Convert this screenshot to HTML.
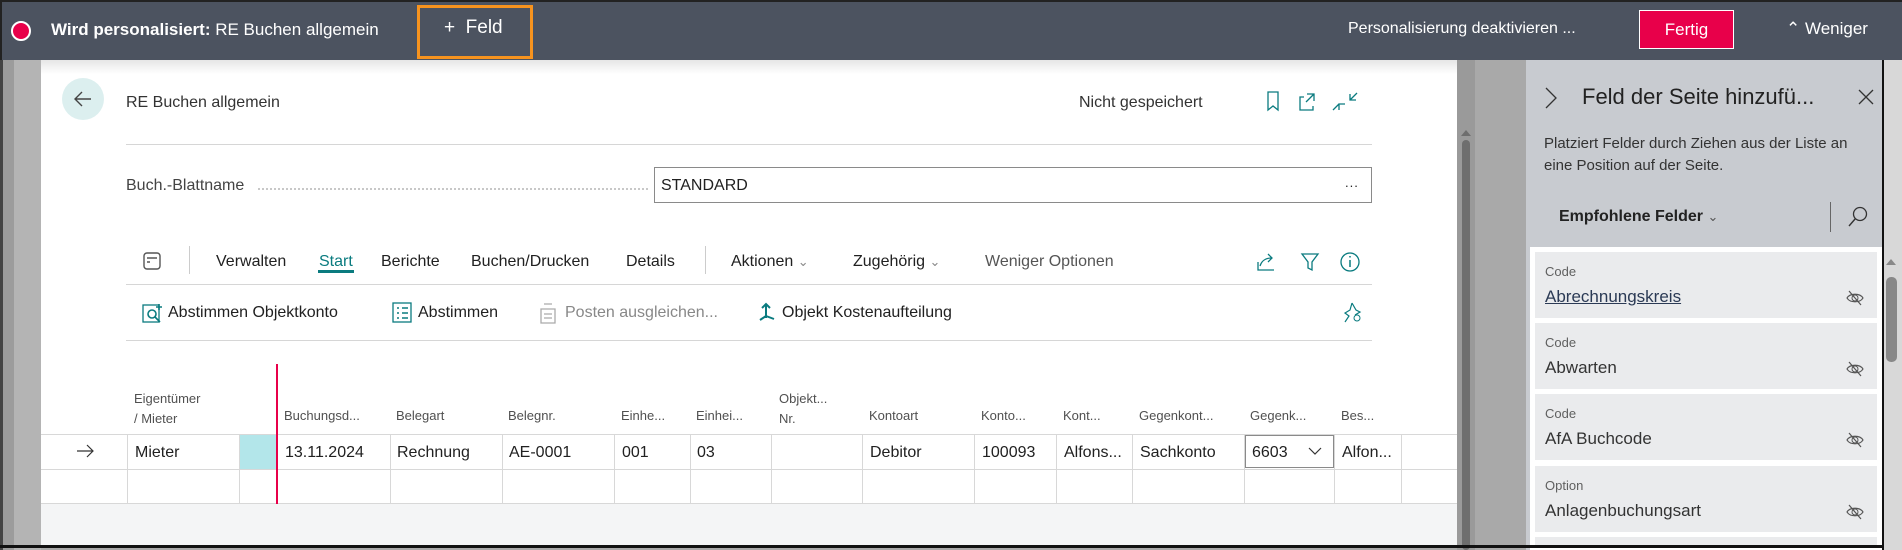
<!DOCTYPE html>
<html><head><meta charset="utf-8"><style>
*{box-sizing:border-box;margin:0;padding:0}
body{width:1902px;height:550px;overflow:hidden;position:relative;font-family:"Liberation Sans",sans-serif;background:#a8a8a8;color:#212121}
.a{position:absolute;white-space:nowrap}
.top{left:0;top:0;width:1902px;height:60px;background:#4c5360;border-top:2px solid #222;border-left:2px solid #222}
.t{color:#fff;font-size:17px}
.hd{color:#505050;font-size:13px}
.cell{font-size:16px;color:#212121}
.vl{position:absolute;width:1px;background:#d8d8d8}
.card{position:absolute;left:1535px;width:342px;height:66px;background:#eaebed}
.card .l{position:absolute;left:10px;top:12px;font-size:13px;color:#606060}
.card .n{position:absolute;left:10px;top:35px;font-size:17px;color:#333}
.card svg{position:absolute;left:310px;top:36px}
</style></head><body>
<!-- left gutter -->
<div class="a" style="left:0;top:60px;width:41px;height:490px;background:linear-gradient(90deg,#444 0 3px,#9c9c9c 3px 14px,#b4b4b4 14px 41px)"></div>
<!-- main white -->
<div class="a" style="left:41px;top:60px;width:1416px;height:485px;background:#fff"></div>
<div class="a" style="left:41px;top:60px;width:1416px;height:14px;background:linear-gradient(#e6e6e6,#fff)"></div>
<!-- scrollbar main -->
<div class="a" style="left:1457px;top:60px;width:18px;height:490px;background:#9a9a9a"></div>
<div class="a" style="left:1462px;top:140px;width:8px;height:410px;background:#6e6e6e;border-radius:4px"></div>
<div class="a" style="left:1461px;top:130px;width:0;height:0;border-left:5px solid transparent;border-right:5px solid transparent;border-bottom:6px solid #6e6e6e"></div>
<div class="a" style="left:1475px;top:60px;width:51px;height:490px;background:#a9a9a9"></div>
<!-- panel -->
<div class="a" style="left:1526px;top:60px;width:356px;height:490px;background:#c8cbd0"></div>
<div class="a" style="left:1530px;top:247px;width:352px;height:303px;background:#fff"></div>
<div class="a" style="left:1882px;top:0;width:2px;height:550px;background:#111"></div>
<div class="a" style="left:1884px;top:60px;width:18px;height:490px;background:#d8d8d8"></div>
<div class="a" style="left:1886px;top:277px;width:11px;height:85px;background:#888;border-radius:5px"></div>
<div class="a" style="left:1886px;top:259px;border-left:5px solid transparent;border-right:5px solid transparent;border-bottom:6px solid #888"></div>
<div class="a" style="left:0;top:545px;width:1884px;height:3px;background:#111"></div>

<!-- top bar -->
<div class="a top"></div>
<div class="a" style="left:11px;top:21px;width:20px;height:20px;border-radius:50%;background:#e8004a;border:2px solid #fff"></div>
<div class="a t" style="left:51px;top:20px"><b>Wird personalisiert:</b> RE Buchen allgemein</div>
<div class="a" style="left:417px;top:5px;width:116px;height:54px;border:3px solid #f7931e"></div>
<div class="a t" style="left:444px;top:17px;font-size:19px">+&nbsp; Feld</div>
<div class="a t" style="left:1348px;top:20px;font-size:16px">Personalisierung deaktivieren ...</div>
<div class="a" style="left:1639px;top:10px;width:95px;height:39px;background:#e8004a;border:1px solid #fff;color:#fff;font-size:17px;text-align:center;line-height:37px">Fertig</div>
<div class="a t" style="left:1786px;top:19px;font-size:17px">&#8963; Weniger</div>

<!-- header -->
<div class="a" style="left:62px;top:78px;width:42px;height:42px;border-radius:50%;background:#dcefef"></div>
<svg class="a" style="left:71px;top:88px" width="24" height="22"><path d="M20 11H4M11 4L4 11L11 18" stroke="#444" stroke-width="1.4" fill="none"/></svg>
<div class="a" style="left:126px;top:94px;font-size:16px;color:#333">RE Buchen allgemein</div>
<div class="a" style="left:1079px;top:94px;font-size:16px;color:#333">Nicht gespeichert</div>
<svg class="a" style="left:1262px;top:90px" width="100" height="24"><path d="M6 2h10v18l-5-4-5 4z" stroke="#0a7b7f" fill="none" stroke-width="1.3"/><path d="M42 7h-4v13h13v-4M45 4h7v7M52 4l-8 8" stroke="#0a7b7f" fill="none" stroke-width="1.3"/><path d="M88 4v6h6M88 10l7-7M77 20v-6h6M77 14l-6 6" stroke="#0a7b7f" fill="none" stroke-width="1.3"/></svg>
<div class="a" style="left:126px;top:144px;width:1246px;height:1px;background:#d6d6d6"></div>
<div class="a" style="left:126px;top:177px;font-size:16px;color:#444">Buch.-Blattname</div>
<div class="a" style="left:258px;top:188px;width:390px;border-top:2px dotted #c8c8c8"></div>
<div class="a" style="left:654px;top:167px;width:718px;height:36px;border:1px solid #8a8a8a"></div>
<div class="a" style="left:661px;top:177px;font-size:16px">STANDARD</div>
<div class="a" style="left:1345px;top:175px;font-size:13px;letter-spacing:1px">...</div>

<!-- menu -->
<svg class="a" style="left:142px;top:251px" width="22" height="22"><rect x="2" y="2" width="16" height="16" rx="3" stroke="#555" fill="none" stroke-width="1.4"/><path d="M5 7h10M5 11h3" stroke="#555" stroke-width="1.6"/></svg>
<div class="a" style="left:189px;top:246px;width:1px;height:28px;background:#ccc"></div>
<div class="a" style="left:705px;top:246px;width:1px;height:28px;background:#ccc"></div>
<div class="a" style="left:216px;top:253px;font-size:16px">Verwalten</div>
<div class="a" style="left:319px;top:253px;font-size:16px;color:#0a7b7f">Start</div>
<div class="a" style="left:318px;top:270px;width:36px;height:3px;background:#0a7b7f"></div>
<div class="a" style="left:381px;top:253px;font-size:16px">Berichte</div>
<div class="a" style="left:471px;top:253px;font-size:16px">Buchen/Drucken</div>
<div class="a" style="left:626px;top:253px;font-size:16px">Details</div>
<div class="a" style="left:731px;top:253px;font-size:16px">Aktionen <span style="color:#888;font-size:13px">&#8964;</span></div>
<div class="a" style="left:853px;top:253px;font-size:16px">Zugehörig <span style="color:#888;font-size:13px">&#8964;</span></div>
<div class="a" style="left:985px;top:253px;font-size:16px;color:#555">Weniger Optionen</div>
<svg class="a" style="left:1255px;top:250px" width="110" height="24"><path d="M3 12v8h16M5 16c2-6 6-8 12-8M13 4l4 4-4 4" stroke="#0a7b7f" fill="none" stroke-width="1.3"/><path d="M47 4h16l-6 8v8l-4-2v-6z" stroke="#0a7b7f" fill="none" stroke-width="1.3"/><circle cx="95" cy="12" r="9" stroke="#0a7b7f" fill="none" stroke-width="1.3"/><path d="M95 10v7M95 6v1.5" stroke="#0a7b7f" stroke-width="1.5"/></svg>
<div class="a" style="left:126px;top:284px;width:1246px;height:1px;background:#d6d6d6"></div>

<!-- actions -->
<svg class="a" style="left:142px;top:302px" width="22" height="22"><rect x="1" y="3" width="16" height="17" stroke="#0a7b7f" fill="none" stroke-width="1.3"/><circle cx="10" cy="12" r="4" stroke="#0a7b7f" fill="none" stroke-width="1.6"/><path d="M13 15l5 5M17 2v6M14 5h6" stroke="#0a7b7f" stroke-width="1.6"/></svg>
<div class="a" style="left:168px;top:304px;font-size:16px">Abstimmen Objektkonto</div>
<svg class="a" style="left:392px;top:302px" width="22" height="22"><rect x="1" y="1" width="18" height="19" stroke="#0a7b7f" fill="none" stroke-width="1.3"/><path d="M5 6h2M10 6h6M5 11h2M10 11h6M5 16h2M10 16h6" stroke="#0a7b7f" stroke-width="1.5"/></svg>
<div class="a" style="left:418px;top:304px;font-size:16px">Abstimmen</div>
<svg class="a" style="left:539px;top:301px" width="20" height="24"><path d="M2 8h14v14H2zM5 3h8M5 13h8M5 17h8" stroke="#aaa" fill="none" stroke-width="1.3"/></svg>
<div class="a" style="left:565px;top:304px;font-size:16px;color:#888">Posten ausgleichen...</div>
<svg class="a" style="left:757px;top:302px" width="22" height="22"><path d="M9 2v14M5 6l4-4 4 4M9 14l-6 4M9 14l8 3" stroke="#0a7b7f" fill="none" stroke-width="2"/></svg>
<div class="a" style="left:782px;top:304px;font-size:16px">Objekt Kostenaufteilung</div>
<svg class="a" style="left:1342px;top:301px" width="22" height="24"><path d="M10 2l-2 7-5 3 4 3-4 6M10 2l4 7 4 2-5 3" stroke="#0a7b7f" fill="none" stroke-width="1.2"/><circle cx="15" cy="17" r="3" stroke="#0a7b7f" fill="none"/></svg>
<div class="a" style="left:126px;top:340px;width:1246px;height:1px;background:#d6d6d6"></div>

<!-- table -->
<div class="a hd" style="left:134px;top:389px;line-height:20px">Eigentümer<br>/ Mieter</div>
<div class="a hd" style="left:284px;top:408px">Buchungsd...</div>
<div class="a hd" style="left:396px;top:408px">Belegart</div>
<div class="a hd" style="left:508px;top:408px">Belegnr.</div>
<div class="a hd" style="left:621px;top:408px">Einhe...</div>
<div class="a hd" style="left:696px;top:408px">Einhei...</div>
<div class="a hd" style="left:779px;top:389px;line-height:20px">Objekt...<br>Nr.</div>
<div class="a hd" style="left:869px;top:408px">Kontoart</div>
<div class="a hd" style="left:981px;top:408px">Konto...</div>
<div class="a hd" style="left:1063px;top:408px">Kont...</div>
<div class="a hd" style="left:1139px;top:408px">Gegenkont...</div>
<div class="a hd" style="left:1250px;top:408px">Gegenk...</div>
<div class="a hd" style="left:1341px;top:408px">Bes...</div>

<div class="a" style="left:41px;top:434px;width:1416px;height:1px;background:#d8d8d8"></div>
<div class="a" style="left:41px;top:469px;width:1416px;height:1px;background:#d8d8d8"></div>
<div class="a" style="left:41px;top:503px;width:1416px;height:1px;background:#d8d8d8"></div>
<div class="a" style="left:41px;top:504px;width:1416px;height:41px;background:#f4f5f6"></div>
<div class="a" style="left:239px;top:435px;width:37px;height:34px;background:#b3e6ea"></div>
<div class="vl" style="left:127px;top:435px;height:68px"></div>
<div class="vl" style="left:239px;top:435px;height:68px"></div>
<div class="vl" style="left:390px;top:435px;height:68px"></div>
<div class="vl" style="left:502px;top:435px;height:68px"></div>
<div class="vl" style="left:614px;top:435px;height:68px"></div>
<div class="vl" style="left:690px;top:435px;height:68px"></div>
<div class="vl" style="left:771px;top:435px;height:68px"></div>
<div class="vl" style="left:862px;top:435px;height:68px"></div>
<div class="vl" style="left:974px;top:435px;height:68px"></div>
<div class="vl" style="left:1056px;top:435px;height:68px"></div>
<div class="vl" style="left:1132px;top:435px;height:68px"></div>
<div class="vl" style="left:1244px;top:435px;height:68px"></div>
<div class="vl" style="left:1334px;top:435px;height:68px"></div>
<div class="vl" style="left:1401px;top:435px;height:68px"></div>
<div class="a" style="left:276px;top:364px;width:2px;height:140px;background:#e8004a"></div>
<svg class="a" style="left:76px;top:444px" width="20" height="14"><path d="M1 7h16M11 1l6 6-6 6" stroke="#333" fill="none" stroke-width="1.2"/></svg>
<div class="a cell" style="left:135px;top:444px">Mieter</div>
<div class="a cell" style="left:285px;top:444px">13.11.2024</div>
<div class="a cell" style="left:397px;top:444px">Rechnung</div>
<div class="a cell" style="left:509px;top:444px">AE-0001</div>
<div class="a cell" style="left:622px;top:444px">001</div>
<div class="a cell" style="left:697px;top:444px">03</div>
<div class="a cell" style="left:870px;top:444px">Debitor</div>
<div class="a cell" style="left:982px;top:444px">100093</div>
<div class="a cell" style="left:1064px;top:444px">Alfons...</div>
<div class="a cell" style="left:1140px;top:444px">Sachkonto</div>
<div class="a" style="left:1245px;top:435px;width:89px;height:33px;border:1px solid #8a8a8a;background:#fff"></div>
<div class="a cell" style="left:1252px;top:444px;width:36px;overflow:hidden">66033</div>
<svg class="a" style="left:1307px;top:445px" width="16" height="12"><path d="M2 3l6 6 6-6" stroke="#333" fill="none" stroke-width="1.2"/></svg>
<div class="a cell" style="left:1342px;top:444px">Alfon...</div>

<!-- panel content -->
<svg class="a" style="left:1543px;top:85px" width="16" height="26"><path d="M3 3l10 10-10 10" stroke="#333" fill="none" stroke-width="1.3"/></svg>
<div class="a" style="left:1582px;top:84px;font-size:22px;color:#222">Feld der Seite hinzufü...</div>
<svg class="a" style="left:1857px;top:88px" width="18" height="18"><path d="M2 2l14 14M16 2L2 16" stroke="#333" stroke-width="1.3"/></svg>
<div class="a" style="left:1544px;top:133px;font-size:15px;color:#333;line-height:22px">Platziert Felder durch Ziehen aus der Liste an<br>eine Position auf der Seite.</div>
<div class="a" style="left:1559px;top:208px;font-size:16px;font-weight:bold;color:#222">Empfohlene Felder <span style="font-weight:normal;color:#555;font-size:13px">&#8964;</span></div>
<div class="a" style="left:1830px;top:202px;width:1px;height:30px;background:#666"></div>
<svg class="a" style="left:1846px;top:205px" width="24" height="24"><circle cx="14" cy="9" r="6.5" stroke="#333" fill="none" stroke-width="1.3"/><path d="M9.5 13.5L3 21" stroke="#333" stroke-width="1.4"/></svg>

<div class="card" style="top:252px"><div class="l">Code</div><div class="n" style="text-decoration:underline;color:#2b3a55">Abrechnungskreis</div><svg width="20" height="20"><path d="M2 10c3-5 13-5 16 0c-3 5-13 5-16 0zM4 3l12 14" stroke="#555" fill="none" stroke-width="1.2"/><circle cx="10" cy="10" r="3" stroke="#555" fill="none"/></svg></div>
<div class="card" style="top:323px"><div class="l">Code</div><div class="n">Abwarten</div><svg width="20" height="20"><path d="M2 10c3-5 13-5 16 0c-3 5-13 5-16 0zM4 3l12 14" stroke="#555" fill="none" stroke-width="1.2"/><circle cx="10" cy="10" r="3" stroke="#555" fill="none"/></svg></div>
<div class="card" style="top:394px"><div class="l">Code</div><div class="n">AfA Buchcode</div><svg width="20" height="20"><path d="M2 10c3-5 13-5 16 0c-3 5-13 5-16 0zM4 3l12 14" stroke="#555" fill="none" stroke-width="1.2"/><circle cx="10" cy="10" r="3" stroke="#555" fill="none"/></svg></div>
<div class="card" style="top:466px"><div class="l">Option</div><div class="n">Anlagenbuchungsart</div><svg width="20" height="20"><path d="M2 10c3-5 13-5 16 0c-3 5-13 5-16 0zM4 3l12 14" stroke="#555" fill="none" stroke-width="1.2"/><circle cx="10" cy="10" r="3" stroke="#555" fill="none"/></svg></div>
<div class="card" style="top:537px;height:8px"></div>
</body></html>
